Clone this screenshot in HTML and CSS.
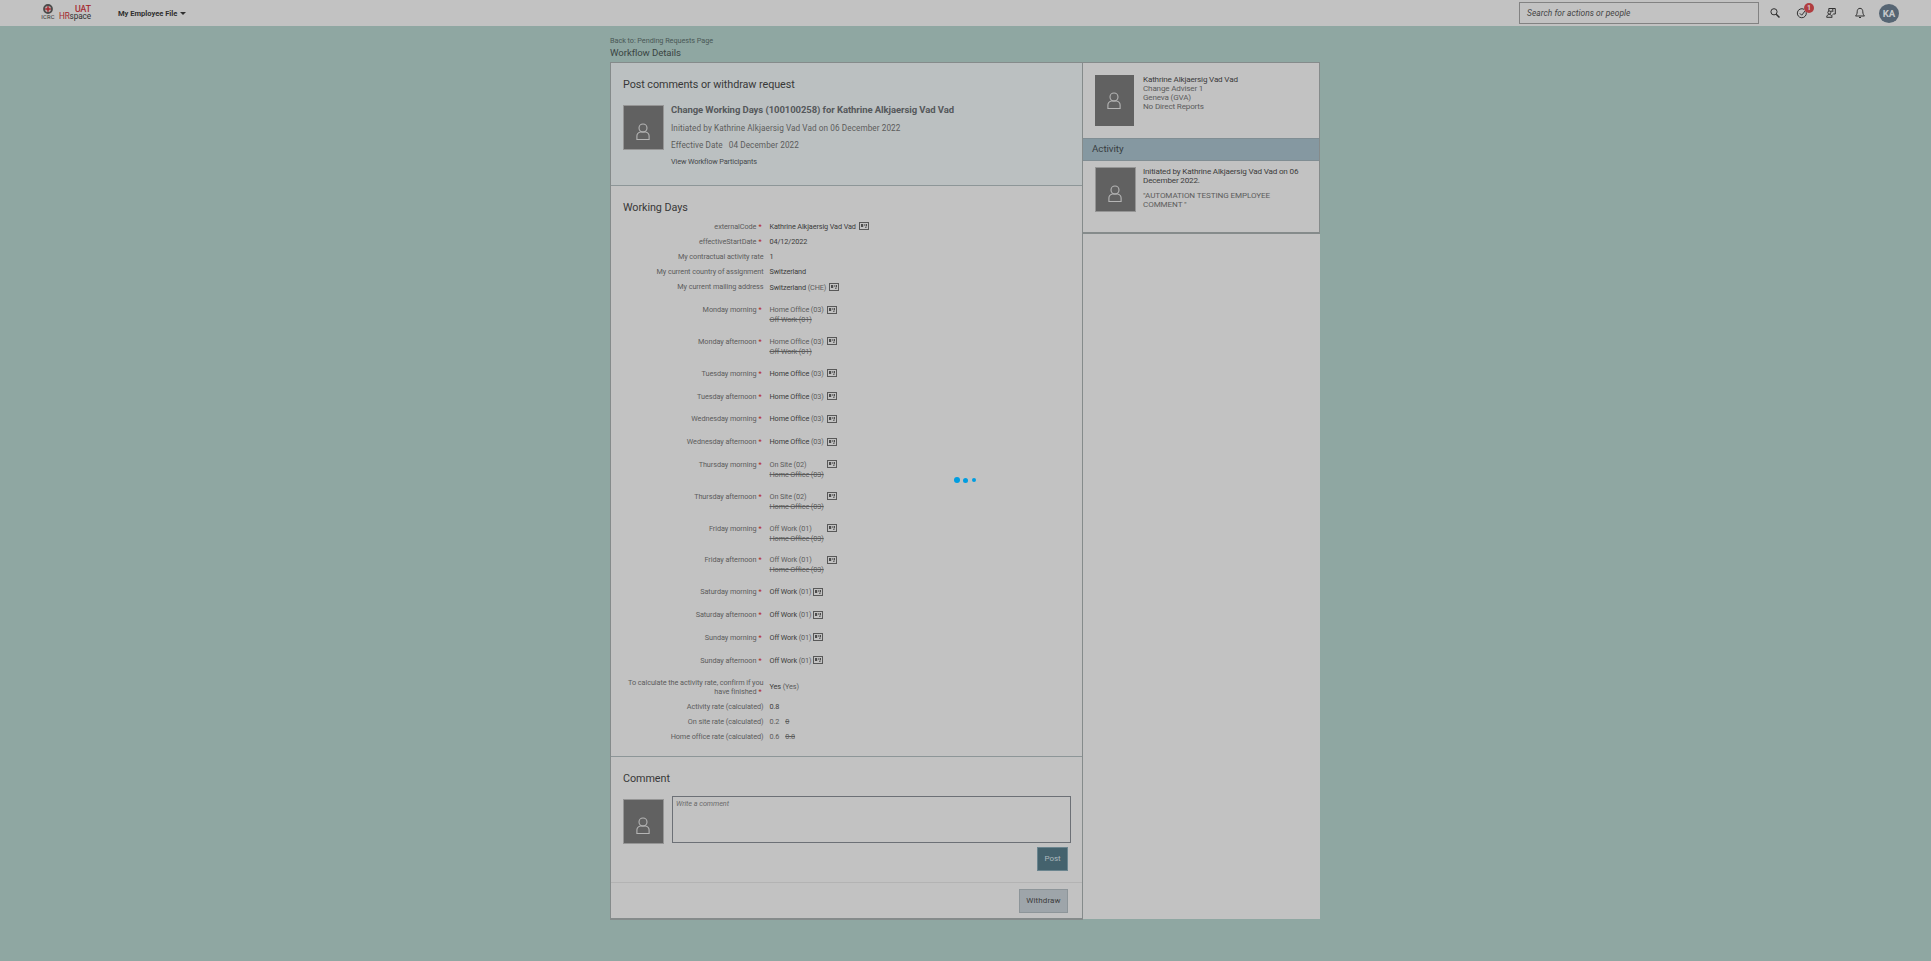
FILE: index.html
```
<!DOCTYPE html>
<html lang="en">
<head>
<meta charset="utf-8">
<title>Workflow Details</title>
<link rel="stylesheet" href="styles.css">
</head>
<body>
<svg class="defs" aria-hidden="true">
  <symbol id="card" viewBox="0 0 10 8"><rect x=".5" y=".5" width="9" height="7" fill="none" stroke="#585858"/><path d="M2 2h2.200v3H2zM5.200 2.200h1v1.600h-1zM6.800 2h1.200v2.200H6.800zM6 4.800h1.600v1H6z" fill="#4c4c4c"/></symbol>
  <symbol id="person" viewBox="0 0 14 18"><ellipse cx="7" cy="5" rx="4" ry="4" fill="none" stroke="#b5b5b5" stroke-width="1.100"/><path d="M4.300 9C2 9.600.900 10.900.900 13v3.500h12.200V13c0-2.100-1.100-3.400-3.400-4z" fill="none" stroke="#b5b5b5" stroke-width="1.100"/></symbol>
</svg>
<header class="topbar">
  <div class="logo">
    <svg class="emblem" viewBox="0 0 10 10"><circle cx="5" cy="5" r="4" fill="#b9aaaa" stroke="#4b4b4b" stroke-width="1.800"/><path d="M5 2.200v5.600M2.200 5h5.600" stroke="#a5262c" stroke-width="1.500"/></svg>
    <span class="icrc">ICRC</span>
  </div>
  <div class="brand"><span class="uat">UAT</span><span class="hr"><b>HR</b>space</span></div>
  <div class="menu">My Employee File<i class="caret"></i></div>
  <div class="search">Search for actions or people</div>
  <svg class="ico search-ico" viewBox="0 0 12 12"><circle cx="5" cy="4.800" r="3.100"/><path d="M7.200 7.200l3.300 3.300" stroke-width="1.500"/></svg>
  <div class="todo"><svg class="ico" viewBox="0 0 12 12"><path d="M10.200 5.200A4.500 4.500 0 1 1 8 2.300M3.800 6.300l1.900 1.900 3.700-4.600"/></svg><span class="badge">1</span></div>
  <svg class="ico chat" viewBox="0 0 12 12"><path d="M3.800 4V1.500H10.300V7H8.500L7.300 8.200M7.800 2v3M6.200 3.500V5"/><circle cx="4.300" cy="5.500" r="1.500"/><path d="M1.700 10.300c0-1.800 1-2.800 2.600-2.800s2.500 1 2.800 2.800z"/></svg>
  <svg class="ico bell" viewBox="0 0 12 12"><path d="M6 1.300C4 1.300 3.200 2.900 3.200 4.800c0 2.100-.8 3.300-1.700 4.200h9c-.9-.9-1.700-2.100-1.700-4.200C8.800 2.900 8 1.300 6 1.300zM5 10.500h2"/></svg>
  <div class="user">KA</div>
</header>

<main class="page">
  <div class="crumb">Back to: Pending Requests Page</div>
  <h1>Workflow Details</h1>
  <div class="panel">
    <div class="left">
      <section class="request">
        <h2>Post comments or withdraw request</h2>
        <div class="req-body">
          <div class="photo"><svg><use href="#person"/></svg></div>
          <div class="req-text">
            <h3>Change Working Days (100100258) for Kathrine Alkjaersig Vad Vad</h3>
            <p>Initiated by Kathrine Alkjaersig Vad Vad on 06 December 2022</p>
            <p>Effective Date<span class="date">04 December 2022</span></p>
            <a>View Workflow Participants</a>
          </div>
        </div>
      </section>
      <section class="working">
        <h2>Working Days</h2>
        <div class="row"><label>externalCode<em>*</em></label><div class="val"><span class="dk">Kathrine Alkjaersig Vad Vad</span><svg class="card"><use href="#card"/></svg></div></div>
        <div class="row"><label>effectiveStartDate<em>*</em></label><div class="val dk">04/12/2022</div></div>
        <div class="row"><label>My contractual activity rate</label><div class="val dk">1</div></div>
        <div class="row"><label>My current country of assignment</label><div class="val dk">Switzerland</div></div>
        <div class="row mail"><label>My current mailing address</label><div class="val"><span><b>Switzerland</b> (CHE)</span><svg class="card"><use href="#card"/></svg></div></div>
        <div class="row pair"><label>Monday morning<em>*</em></label><div class="val"><span>Home Office (03)<br><s>Off Work (01)</s></span><svg class="card"><use href="#card"/></svg></div></div>
        <div class="row pair"><label>Monday afternoon<em>*</em></label><div class="val"><span>Home Office (03)<br><s>Off Work (01)</s></span><svg class="card"><use href="#card"/></svg></div></div>
        <div class="row day"><label>Tuesday morning<em>*</em></label><div class="val"><span><b>Home Office</b> (03)</span><svg class="card"><use href="#card"/></svg></div></div>
        <div class="row day"><label>Tuesday afternoon<em>*</em></label><div class="val"><span><b>Home Office</b> (03)</span><svg class="card"><use href="#card"/></svg></div></div>
        <div class="row day"><label>Wednesday morning<em>*</em></label><div class="val"><span><b>Home Office</b> (03)</span><svg class="card"><use href="#card"/></svg></div></div>
        <div class="row day"><label>Wednesday afternoon<em>*</em></label><div class="val"><span><b>Home Office</b> (03)</span><svg class="card"><use href="#card"/></svg></div></div>
        <div class="row pair"><label>Thursday morning<em>*</em></label><div class="val"><span>On Site (02)<br><s>Home Office (03)</s></span><svg class="card"><use href="#card"/></svg></div></div>
        <div class="row pair"><label>Thursday afternoon<em>*</em></label><div class="val"><span>On Site (02)<br><s>Home Office (03)</s></span><svg class="card"><use href="#card"/></svg></div></div>
        <div class="row pair"><label>Friday morning<em>*</em></label><div class="val"><span>Off Work (01)<br><s>Home Office (03)</s></span><svg class="card"><use href="#card"/></svg></div></div>
        <div class="row pair"><label>Friday afternoon<em>*</em></label><div class="val"><span>Off Work (01)<br><s>Home Office (03)</s></span><svg class="card"><use href="#card"/></svg></div></div>
        <div class="row day"><label>Saturday morning<em>*</em></label><div class="val"><span class="off"><b>Off Work</b> (01)</span><svg class="card"><use href="#card"/></svg></div></div>
        <div class="row day"><label>Saturday afternoon<em>*</em></label><div class="val"><span class="off"><b>Off Work</b> (01)</span><svg class="card"><use href="#card"/></svg></div></div>
        <div class="row day"><label>Sunday morning<em>*</em></label><div class="val"><span class="off"><b>Off Work</b> (01)</span><svg class="card"><use href="#card"/></svg></div></div>
        <div class="row day"><label>Sunday afternoon<em>*</em></label><div class="val"><span class="off"><b>Off Work</b> (01)</span><svg class="card"><use href="#card"/></svg></div></div>
        <div class="row confirm"><label>To calculate the activity rate, confirm if you<br>have finished<em>*</em></label><div class="val"><span><b>Yes</b> (Yes)</span></div></div>
        <div class="row"><label>Activity rate (calculated)</label><div class="val dk">0.8</div></div>
        <div class="row"><label>On site rate (calculated)</label><div class="val">0.2<s class="old">0</s></div></div>
        <div class="row"><label>Home office rate (calculated)</label><div class="val">0.6<s class="old">0.8</s></div></div>
      </section>
      <section class="comment">
        <h2>Comment</h2>
        <div class="comment-body">
          <div class="photo"><svg><use href="#person"/></svg></div>
          <div class="textarea">Write a comment</div>
        </div>
        <div class="btn post"><span>Post</span></div>
      </section>
      <section class="actions"><div class="btn withdraw"><span>Withdraw</span></div></section>
    </div>
    <aside class="right">
      <div class="side-card">
        <div class="profile">
          <div class="photo tall"><svg><use href="#person"/></svg></div>
          <div class="side-text"><b>Kathrine Alkjaersig Vad Vad</b><br>Change Adviser 1<br>Geneva (GVA)<br>No Direct Reports</div>
        </div>
        <div class="activity-head">Activity</div>
        <div class="activity">
          <div class="photo"><svg><use href="#person"/></svg></div>
          <div class="side-text"><b>Initiated by Kathrine Alkjaersig Vad Vad on 06<br>December 2022.</b><p>"AUTOMATION TESTING EMPLOYEE<br>COMMENT "</p></div>
        </div>
      </div>
    </aside>
  </div>
</main>
<div class="busy"><i></i><i></i><i></i></div>
</body>
</html>
```
FILE: styles.css
```
* { box-sizing: border-box; }
body { margin: 0; width: 1931px; height: 961px; overflow: hidden; background: #8fa7a2; color: #5c5c5c; font: 7.3px/9px Roboto, "Noto Sans", sans-serif; letter-spacing: -.07px; }
h1, h2, h3, p { margin: 0; font-weight: 400; }
.defs { position: absolute; width: 0; height: 0; }

.topbar { display: flex; height: 26px; background: #c2c2c2; padding-left: 40px; color: #303030; }
.topbar > * { flex: none; }
.logo { width: 16px; padding-top: 4px; display: flex; flex-direction: column; align-items: center; }
.emblem { width: 10px; height: 10px; }
.icrc { font-size: 5.800px; line-height: 6px; letter-spacing: .15px; }
.brand { width: 35px; padding-top: 5px; display: flex; flex-direction: column; align-items: flex-end; }
.uat { color: #a5262c; font-size: 8.800px; letter-spacing: 0; line-height: 8px; -webkit-text-stroke: .2px; }
.hr { font-size: 8.200px; line-height: 6px; white-space: nowrap; letter-spacing: -.1px; }
.hr b { color: #a5262c; font-weight: 400; }
.menu { width: 1428px; padding: 9px 0 0 27px; font-size: 7.600px; font-weight: 700; letter-spacing: -.03px; display: flex; }
.caret { margin: 3px 0 0 3px; width: 0; height: 0; border: 3px solid transparent; border-top: 3.500px solid #303030; }
.search { width: 240px; height: 22px; margin-top: 2px; border: 1px solid #828282; font-style: italic; font-size: 8.400px; line-height: 20px; padding-left: 7px; color: #444; letter-spacing: .06px; }
.ico { width: 12px; height: 12px; fill: none; stroke: #303030; stroke-width: 1; display: block; }
.search-ico { margin: 7px 0 0 10px; }
.todo { position: relative; margin: 7px 0 0 15px; }
.badge { position: absolute; left: 8px; top: -4px; width: 10px; height: 10px; border-radius: 50%; background: #b03d40; color: #d6cccc; font-size: 7px; line-height: 10px; font-weight: 700; text-align: center; }
.chat { margin: 7px 0 0 17px; }
.bell { margin: 7px 0 0 17px; }
.user { margin: 4px 0 0 13px; width: 20px; height: 19px; border-radius: 50%; background: #566573; color: #c5c8ca; font: 700 9.600px/19px Roboto, sans-serif; text-align: center; }

.page { width: 710px; margin-left: 610px; padding-top: 10px; }
.crumb { height: 10px; line-height: 10px; color: #4a5856; letter-spacing: -.06px; }
h1 { height: 16px; font-size: 9.600px; line-height: 13px; color: #3a4543; }
.panel { display: flex; height: 858px; }
.left { width: 473px; height: 858px; border: 1px solid #858b8b; border-bottom-width: 2px; background: #c2c2c2; }
h2 { font-size: 10.800px; line-height: 14px; color: #383838; }
.request { height: 123px; background: #bbc0c1; border-bottom: 1px solid #8d9698; padding: 15px 0 0 12px; }
.req-body { display: flex; margin-top: 13px; gap: 7px; }
.photo { width: 41px; height: 45px; flex: none; background: #616161; border: 1px solid #959595; display: flex; align-items: center; justify-content: center; padding: 9px 1px 0 0; }
.photo svg { width: 14px; height: 18px; }
h3 { font-size: 9.500px; font-weight: 700; line-height: 10px; color: #55585b; }
.req-text p { font-size: 8.200px; line-height: 10px; margin-top: 7.500px; letter-spacing: .08px; }
.date { margin-left: 6px; }
.req-text a { display: block; margin-top: 7px; line-height: 10px; color: #44484b; letter-spacing: -.13px; }

.working { height: 571px; border-bottom: 1px solid #8d9698; padding-top: 15px; }
.working h2 { padding-left: 12px; height: 18px; }
.row { display: flex; height: 15px; padding-top: 3px; }
.row label { width: 152.500px; text-align: right; white-space: nowrap; }
.row em { color: #b32024; font-style: normal; margin: 0 2px; display: inline-block; }
.val { display: flex; padding-left: 6px; white-space: nowrap; letter-spacing: -.12px; }
.dk, .val b { color: #3c3c3c; font-weight: 400; }
.card { width: 10px; height: 8px; margin-left: 3px; }
.mail { height: 19px; }
.mail .val { padding-top: 1px; }
.pair { height: 31.900px; padding-top: 7px; }
.pair .val { line-height: 10px; }
.pair .card, .day .card { margin-top: .5px; }
.day { height: 22.750px; padding-top: 7px; }
.off { letter-spacing: -.14px; }
.off + .card { margin-left: 2px; }
.confirm { height: 27.600px; padding-top: 7px; }
.confirm .val { padding-top: 4px; }
.old { margin-left: 6px; }

.comment { height: 126px; border-bottom: 1px solid #b3b3b3; padding: 15px 0 0 12px; }
.comment-body { display: flex; margin-top: 10px; gap: 8px; }
.comment-body .photo { margin-top: 3px; }
.textarea { width: 399px; height: 47px; border: 1px solid #6c7076; font-style: italic; padding: 2px 3px; color: #6c6c6c; }
.btn { border: 1px solid; font-size: 8px; height: 24px; line-height: 22px; text-align: center; }
.post { width: 31px; margin: 3px 0 0 414px; background: #44626d; border-color: #6b858f; color: #adb9bd; }
.withdraw { width: 49px; margin: 6px 0 0 408px; background: #9ea5aa; border-color: #8d9599; color: #3c3c3c; letter-spacing: .1px; }

.right { width: 237px; height: 857px; background: #c2c2c2; }
.side-card { height: 172px; border: 1px solid #858b8b; border-left: 0; border-bottom: 2px solid #858b8b; }
.profile { height: 75px; display: flex; padding: 12px 0 0 12px; gap: 9px; }
.photo.tall { width: 39px; height: 51px; border: 0; padding-top: 0; }
.side-text { font-size: 8.100px; line-height: 9px; white-space: nowrap; letter-spacing: -.17px; }
.side-text b { font-weight: 400; color: #3c3c3c; }
.profile .side-text { margin-top: -.5px; }
.activity-head { height: 23px; background: #8598a1; border: 1px solid #808d93; border-width: 1px 0; line-height: 20px; padding-left: 9px; font-size: 9.800px; color: #383e42; }
.activity { display: flex; padding: 6px 0 0 12px; gap: 7px; }
.side-text p { margin-top: 6px; letter-spacing: -.1px; }

.busy { position: absolute; left: 954px; top: 475px; width: 24px; height: 10px; display: flex; align-items: center; gap: 3px; }
.busy i { width: 6px; height: 6px; border-radius: 50%; background: #009de0; }
.busy i:nth-child(2) { width: 5px; height: 5px; }
.busy i:nth-child(3) { width: 4px; height: 4px; margin-left: 1px; }
```
